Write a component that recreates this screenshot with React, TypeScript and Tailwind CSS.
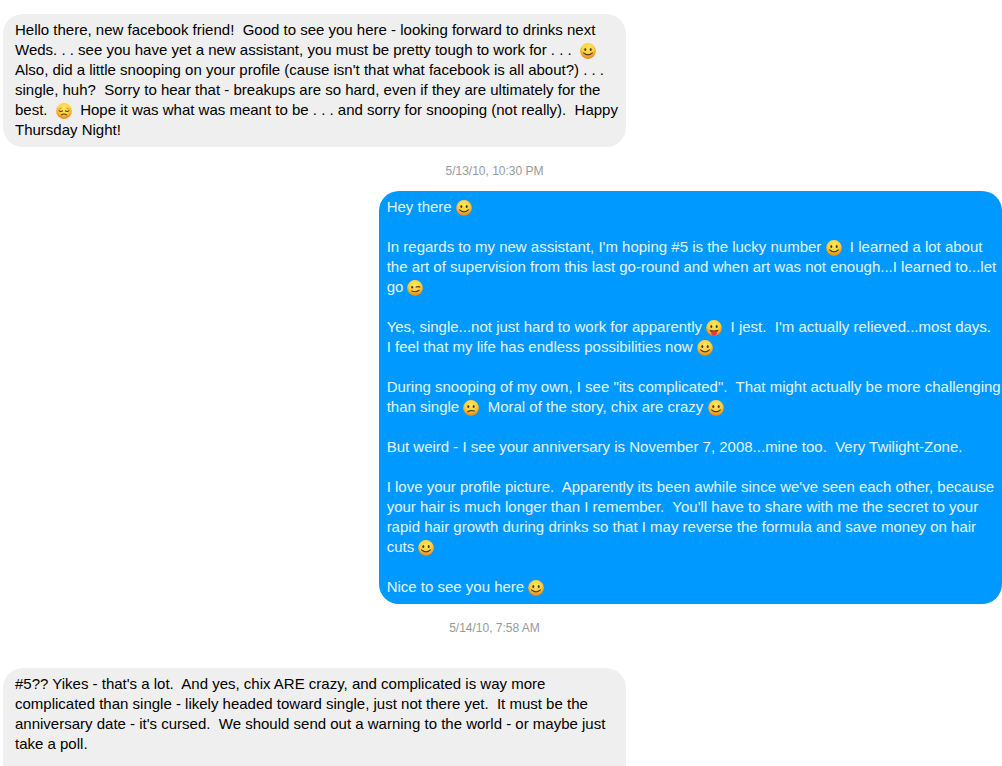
import type { ReactNode } from "react";

type Mood = "smile" | "wink" | "tongue" | "confused" | "sad";

const labels: Record<Mood, string> = {
  smile: "smiling face",
  wink: "winking face",
  tongue: "face with tongue out",
  confused: "confused face",
  sad: "disappointed face",
};

const ink = "#4a3a1e";

function Eyes() {
  return (
    <>
      <ellipse cx="5.3" cy="6.5" rx="1" ry="1.5" fill={ink} />
      <ellipse cx="10.7" cy="6.5" rx="1" ry="1.5" fill={ink} />
    </>
  );
}

const features: Record<Mood, ReactNode> = {
  smile: (
    <>
      <Eyes />
      <path d="M3.6 9.8Q8 13.8 12.4 9.8" stroke={ink} strokeWidth="1.1" fill="none" strokeLinecap="round" />
    </>
  ),
  wink: (
    <>
      <ellipse cx="5.2" cy="7.2" rx="1" ry="1.3" fill={ink} />
      <path d="M9.2 7.1Q11 6 12.8 7.1" stroke={ink} strokeWidth="1.2" fill="none" strokeLinecap="round" />
      <path d="M4.8 11Q8.8 12.8 12 10.2" stroke={ink} strokeWidth="1.1" fill="none" strokeLinecap="round" />
    </>
  ),
  tongue: (
    <>
      <Eyes />
      <path d="M3.4 9.8Q8 11.2 12.6 9.8Q11.6 12.9 8 12.9Q4.4 12.9 3.4 9.8Z" fill="#6b2b18" />
      <path d="M5.3 11.5Q8 10.9 10.7 11.5V13.6Q10.4 15.8 8 15.8Q5.6 15.8 5.3 13.6Z" fill="#ef3550" />
    </>
  ),
  confused: (
    <>
      <Eyes />
      <path d="M4.8 11.7Q7.6 10 11.4 11" stroke={ink} strokeWidth="1.2" fill="none" strokeLinecap="round" />
    </>
  ),
  sad: (
    <>
      <path d="M2.8 6.1L5.4 5M13.2 6.1L10.6 5" stroke="#a87424" strokeWidth=".7" strokeLinecap="round" />
      <path d="M3.2 7.8Q5 9.1 6.6 7.8M9.4 7.8Q11 9.1 12.8 7.8" stroke={ink} strokeWidth="1.1" fill="none" strokeLinecap="round" />
      <path d="M5.4 11.9Q8 10.1 10.6 11.9" stroke={ink} strokeWidth="1.1" fill="none" strokeLinecap="round" />
    </>
  ),
};

function Emoji({ mood = "smile" }: { mood?: Mood }) {
  return (
    <svg viewBox="0 0 16 16" role="img" aria-label={labels[mood]} className="inline-block size-4 align-[-4px]">
      <circle cx="8" cy="8" r="7.9" fill="url(#face)" />
      {features[mood]}
    </svg>
  );
}

function Timestamp({ children }: { children: ReactNode }) {
  return <time className="mt-4 mr-4 block text-center text-xs text-[#999999]">{children}</time>;
}

const received = "w-[62.4%] bg-[#efefef] pt-1.5 pr-1 pb-[7px] pl-3 whitespace-pre-wrap text-black";
const sent =
  "mt-3 flex w-[62.4%] flex-col gap-5 self-end rounded-[20px] bg-[#0099ff] pt-1.5 pb-[7px] pl-2 whitespace-pre-wrap text-[#e5f5ff]";

export default function App() {
  return (
    <main className="flex h-screen flex-col overflow-hidden bg-white pt-3.5 pl-[3px] font-['Liberation_Sans',Arial,sans-serif] text-[15px] leading-5">
      <svg className="absolute size-0" aria-hidden="true">
        <defs>
          <radialGradient id="face" cx=".5" cy=".32" r=".68">
            <stop offset="0" stopColor="#ffe766" />
            <stop offset=".55" stopColor="#ffd03c" />
            <stop offset="1" stopColor="#e87c1e" />
          </radialGradient>
        </defs>
      </svg>

      <article className={`${received} shrink-0 rounded-[20px]`}>
        <p>
          {"Hello there, new facebook friend!  Good to see you here - looking forward to drinks next Weds. . . see you have yet a new assistant, you must be pretty tough to work for . . .  "}
          <Emoji />
          {"  Also, did a little snooping on your profile (cause isn't that what facebook is all about?) . . . single, huh?  Sorry to hear that - breakups are so hard, even if they are ultimately for the best.  "}
          <Emoji mood="sad" />
          {"  Hope it was what was meant to be . . . and sorry for snooping (not really).  Happy Thursday Night!"}
        </p>
      </article>

      <Timestamp>5/13/10, 10:30 PM</Timestamp>

      <article className={`${sent} shrink-0`}>
        <p>
          {"Hey there "}
          <Emoji />
        </p>
        <p>
          {"In regards to my new assistant, I'm hoping #5 is the lucky number "}
          <Emoji />
          {"  I learned a lot about the art of supervision from this last go-round and when art was not enough...I learned to...let go "}
          <Emoji mood="wink" />
        </p>
        <p>
          {"Yes, single...not just hard to work for apparently "}
          <Emoji mood="tongue" />
          {"  I jest.  I'm actually relieved...most days.  I\u00a0feel that my life has endless possibilities now "}
          <Emoji />
        </p>
        <p>
          {"During snooping of my own, I see \"its complicated\".  That might actually be more challenging than single "}
          <Emoji mood="confused" />
          {"  Moral of the story, chix are crazy "}
          <Emoji />
        </p>
        <p>{"But weird - I see your anniversary is November 7, 2008...mine too.  Very Twilight-Zone."}</p>
        <p>
          {"I love your profile picture.  Apparently its been awhile since we've seen each other, because your hair is much longer than I remember.  You'll have to share with me the secret to your rapid hair growth during drinks so that I may reverse the formula and save money on hair cuts "}
          <Emoji />
        </p>
        <p>
          {"Nice to see you here "}
          <Emoji />
        </p>
      </article>

      <Timestamp>5/14/10, 7:58 AM</Timestamp>

      <article className={`${received} mt-8 grow rounded-t-[20px]`}>
        <p>
          {"#5?? Yikes - that's a lot.  And yes, chix ARE crazy, and complicated is way more complicated than single - likely headed toward single, just not there yet.  It must be the anniversary date - it's cursed.  We should send out a warning to the world - or maybe just take a poll."}
        </p>
      </article>
    </main>
  );
}
